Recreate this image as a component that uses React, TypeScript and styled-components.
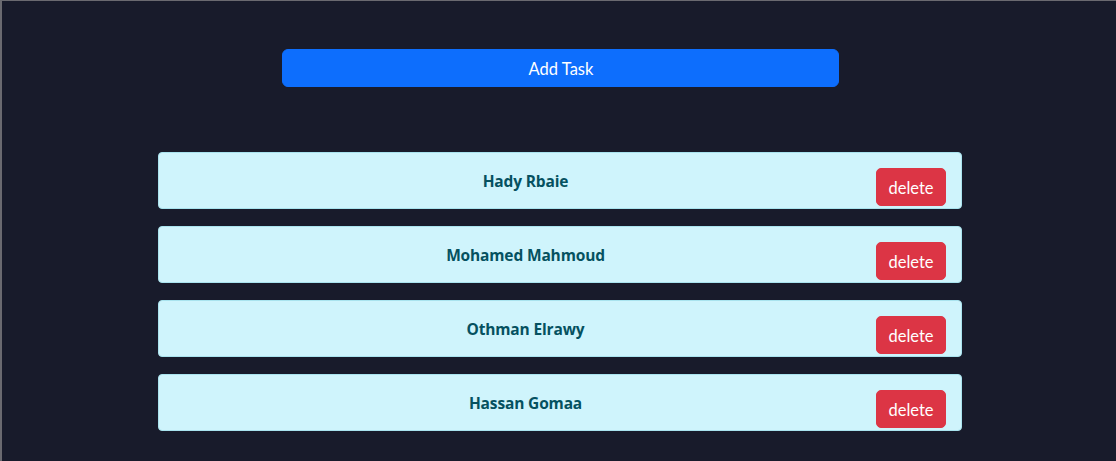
import React, { useState } from "react";
import styled, { createGlobalStyle } from "styled-components";

const GlobalStyle = createGlobalStyle`
  html, body { margin: 0; padding: 0; }
  body {
    background: #181b2b;
    font-family: "Segoe UI", Lato, "Open Sans", sans-serif;
  }
  #root {
    box-sizing: border-box;
    min-height: 100vh;
    border-top: 1px solid #6a6a70;
    border-left: 2px solid #6a6a70;
  }
`;

const Page = styled.main`
  display: flex;
  flex-direction: column;
  align-items: center;
  padding: 48px 0 30px 2px;
`;

const AddButton = styled.button`
  width: 557px;
  height: 38px;
  border: 1px solid #0d6efd;
  border-radius: 6px;
  background: #0d6efd;
  color: #ffffff;
  font-family: Lato, sans-serif;
  font-size: 16.5px;
  line-height: 24px;
  padding: 2px 0 0 1px;
  cursor: pointer;
  margin-left: 1px;
`;

const List = styled.ul`
  list-style: none;
  margin: 65px 0 0;
  padding: 0;
  width: 804px;
  display: flex;
  flex-direction: column;
  gap: 17px;
`;

const Card = styled.li`
  box-sizing: border-box;
  height: 57px;
  display: flex;
  align-items: flex-start;
  padding: 15px 15px 2px 16px;
  background: #cff4fc;
  border: 1px solid #a9e3ee;
  border-radius: 4px;
`;

const Name = styled.h5`
  flex: 1;
  margin: 1px 0 0;
  text-align: center;
  font-family: "Open Sans", sans-serif;
  font-weight: 700;
  font-size: 15.5px;
  line-height: 24px;
  color: #055160;
  letter-spacing: -0.15px;
`;

const DeleteButton = styled.button`
  width: 70px;
  height: 38px;
  border: 1px solid #dc3545;
  border-radius: 5px;
  background: #dc3545;
  color: #ffffff;
  font-family: Lato, sans-serif;
  font-size: 16.5px;
  line-height: 24px;
  padding: 2px 0 0;
  cursor: pointer;
`;

const initial = ["Hady Rbaie", "Mohamed Mahmoud", "Othman Elrawy", "Hassan Gomaa"];

export default function App() {
  const [tasks, setTasks] = useState(initial);
  return (
    <>
      <GlobalStyle />
      <Page>
        <AddButton type="button">Add Task</AddButton>
        <List>
          {tasks.map((t, i) => (
            <Card key={t}>
              <Name>{t}</Name>
              <DeleteButton type="button" onClick={() => setTasks(tasks.filter((_, j) => j !== i))}>
                delete
              </DeleteButton>
            </Card>
          ))}
        </List>
      </Page>
    </>
  );
}
